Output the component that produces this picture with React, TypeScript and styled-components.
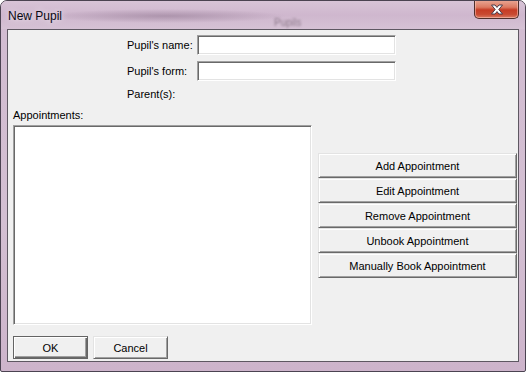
import React from "react";
import styled, { createGlobalStyle, css } from "styled-components";

const GlobalStyle = createGlobalStyle`
  html, body {
    margin: 0;
    padding: 0;
    background: #ffffff;
  }
  body {
    font-family: "Liberation Sans", Arial, sans-serif;
    font-size: 11px;
    color: #000;
  }
`;

const Window = styled.div`
  position: relative;
  width: 526px;
  height: 372px;
  box-sizing: border-box;
  border: 1px solid #4b4351;
  border-radius: 7px 7px 2px 2px;
  background: linear-gradient(180deg, #dccbdb 0%, #d2bcd1 8%, #d3bfd2 60%, #cdb4cb 100%);
  display: flex;
  flex-direction: column;
  overflow: hidden;
`;

const TitleBar = styled.div`
  position: relative;
  height: 28px;
  flex: none;
  display: flex;
  align-items: flex-start;
  padding-left: 7px;
  background:
    radial-gradient(ellipse 120px 7px at 165px 15px, rgba(150, 125, 150, 0.6), rgba(150, 125, 150, 0) 100%),
    linear-gradient(180deg, #d8c4d7 0%, #cfb7ce 50%, #d6c2d5 100%);
`;

const Title = styled.span`
  margin-top: 8px;
  font-family: "Liberation Sans", Arial, sans-serif;
  font-size: 12px;
  color: #0a0a14;
  text-shadow: 0 0 6px rgba(255, 255, 255, 0.9);
`;

const Ghost = styled.span`
  position: absolute;
  left: 273px;
  top: 16px;
  font-size: 10px;
  color: #8d7a8b;
  filter: blur(1px);
`;

const CloseButton = styled.div`
  position: absolute;
  right: 6px;
  top: -1px;
  width: 45px;
  height: 19px;
  box-sizing: border-box;
  border: 1px solid #4f2f2c;
  border-top: none;
  border-radius: 0 0 5px 5px;
  background: linear-gradient(180deg, #eaa997 0%, #dc7a62 40%, #c63c25 55%, #c94a32 80%, #d97a62 100%);
  box-shadow: inset 0 0 0 1px rgba(255, 210, 200, 0.5);
  display: flex;
  align-items: center;
  justify-content: center;
`;

const Client = styled.div`
  flex: 1;
  margin: 0 6px 9px 6px;
  border: 1px solid #5e5862;
  background: #f0f0f0;
  display: flex;
  flex-direction: column;
  padding: 5px 1px 0 5px;
`;

const FormGrid = styled.div`
  display: grid;
  grid-template-columns: 70px 199px;
  grid-template-rows: 20px 20px 13px;
  row-gap: 6px;
  margin-left: 114px;
  align-items: center;
`;

const Label = styled.label`
  white-space: nowrap;
`;

const sunken = css`
  box-sizing: border-box;
  background: #fff;
  border: 1px solid;
  border-color: #a0a0a0 #ffffff #ffffff #a0a0a0;
  box-shadow: inset 1px 1px 0 #696969, inset -1px -1px 0 #e3e3e3;
`;

const TextBox = styled.input`
  ${sunken};
  width: 199px;
  height: 20px;
  margin: 0;
  padding: 0 3px;
  font: inherit;
  outline: none;
`;

const SectionLabel = styled.div`
  margin-top: 9px;
  height: 13px;
  line-height: 13px;
`;

const Middle = styled.div`
  display: flex;
  align-items: flex-start;
  margin-top: 3px;
`;

const ListBox = styled.div`
  ${sunken};
  width: 299px;
  height: 200px;
  flex: none;
`;

const ButtonColumn = styled.div`
  display: flex;
  flex-direction: column;
  margin-left: 6px;
  margin-top: 28px;
  width: 199px;
`;

const Button = styled.button<{ $default?: boolean; $wide?: boolean }>`
  box-sizing: border-box;
  margin: 0;
  padding: 0;
  font: inherit;
  color: #000;
  background: #f0f0f0;
  width: ${(p) => (p.$wide ? "199px" : "75px")};
  height: ${(p) => (p.$wide ? "25px" : "23px")};
  border: 1px solid;
  border-color: #e3e3e3 #696969 #696969 #e3e3e3;
  box-shadow: inset 1px 1px 0 #ffffff, inset -1px -1px 0 #a0a0a0;
  ${(p) =>
    p.$default &&
    css`
      border-color: #646464;
      box-shadow: inset 1px 1px 0 #ffffff, inset -1px -1px 0 #696969, inset -2px -2px 0 #a0a0a0;
    `}
`;

const Footer = styled.div`
  display: flex;
  gap: 5px;
  margin-top: 11px;
`;

const CloseGlyph = () => (
  <svg width="14" height="11" viewBox="0 0 14 11">
    <path
      d="M1.5 1 H5 L7 3.4 L9 1 H12.5 L8.8 5.5 L12.5 10 H9 L7 7.6 L5 10 H1.5 L5.2 5.5 Z"
      fill="#ffffff"
      stroke="#4a3a48"
      strokeWidth="1"
      strokeLinejoin="round"
    />
  </svg>
);

export default function App() {
  const actions = [
    "Add Appointment",
    "Edit Appointment",
    "Remove Appointment",
    "Unbook Appointment",
    "Manually Book Appointment",
  ];
  return (
    <>
      <GlobalStyle />
      <Window>
        <TitleBar>
          <Title>New Pupil</Title>
          <Ghost>Pupils</Ghost>
          <CloseButton>
            <CloseGlyph />
          </CloseButton>
        </TitleBar>
        <Client>
          <FormGrid>
            <Label>Pupil's name:</Label>
            <TextBox />
            <Label>Pupil's form:</Label>
            <TextBox />
            <Label>Parent(s):</Label>
          </FormGrid>
          <SectionLabel>Appointments:</SectionLabel>
          <Middle>
            <ListBox />
            <ButtonColumn>
              {actions.map((a) => (
                <Button key={a} $wide>
                  {a}
                </Button>
              ))}
            </ButtonColumn>
          </Middle>
          <Footer>
            <Button $default>OK</Button>
            <Button>Cancel</Button>
          </Footer>
        </Client>
      </Window>
    </>
  );
}
